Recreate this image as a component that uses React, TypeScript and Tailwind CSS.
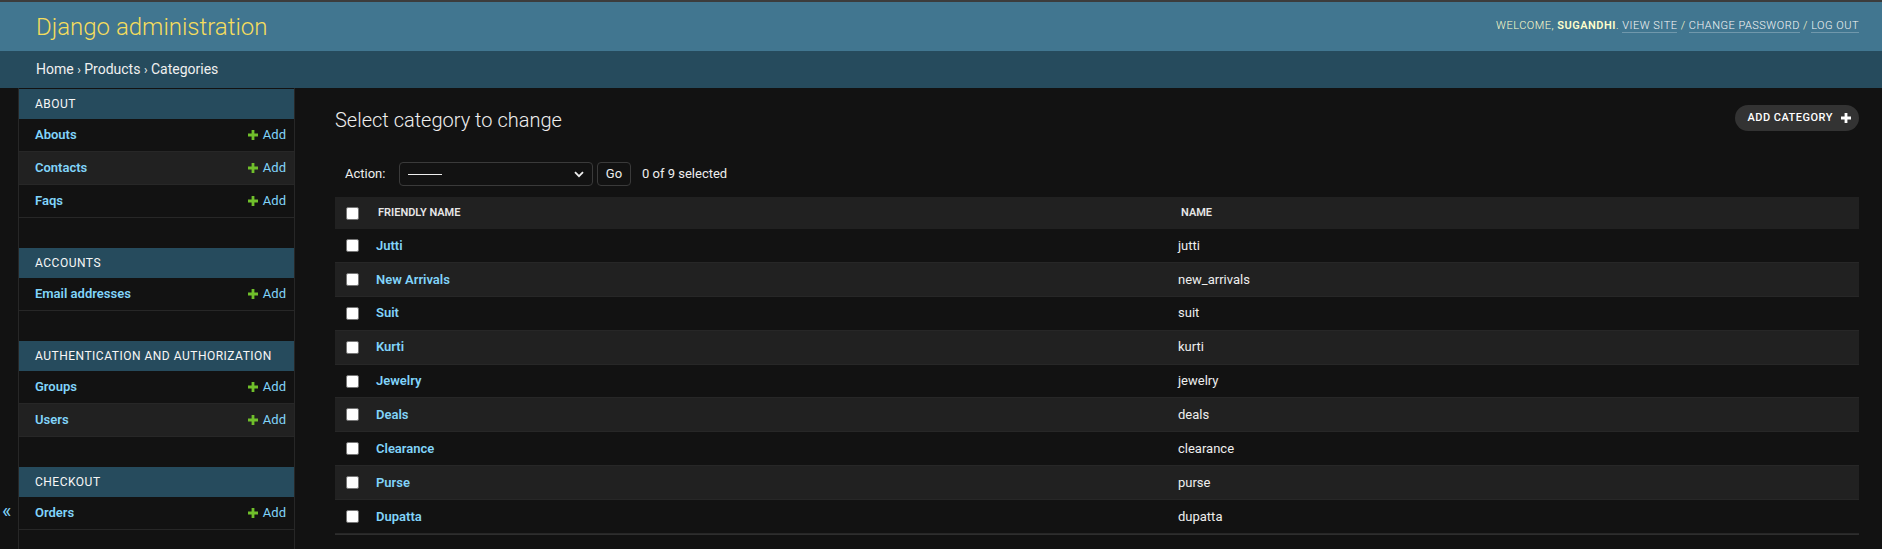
import React from 'react';

const sidebarModules = [
    { title: 'About', models: ['Abouts', 'Contacts', 'Faqs'] },
    { title: 'Accounts', models: ['Email addresses'] },
    { title: 'Authentication and Authorization', models: ['Groups', 'Users'] },
    { title: 'Checkout', models: ['Orders'] },
];

const categories = [
    ['Jutti', 'jutti'],
    ['New Arrivals', 'new_arrivals'],
    ['Suit', 'suit'],
    ['Kurti', 'kurti'],
    ['Jewelry', 'jewelry'],
    ['Deals', 'deals'],
    ['Clearance', 'clearance'],
    ['Purse', 'purse'],
    ['Dupatta', 'dupatta'],
];

const PlusIcon: React.FC<{ color: string }> = ({ color }) => (
    <svg width="10" height="10" viewBox="0 0 10 10" className="shrink-0">
        <path d="M3.6 0h2.8v3.6H10v2.8H6.4V10H3.6V6.4H0V3.6h3.6z" fill={color} />
    </svg>
);

const Checkbox: React.FC = () => (
    <span className="block w-[13px] h-[13px] bg-white rounded-[2px] border border-[#767676]" />
);

export default function App() {
    return (
        <div className="h-[549px] overflow-hidden bg-[#121212] font-[family-name:Roboto,sans-serif] text-[#eeeeee]">
            <div className="h-[2px] bg-[#3c3c3c]" />

            {/* header */}
            <div className="h-[49px] bg-[#417690] flex items-center justify-between pl-[36px] pr-[23px]">
                <div className="text-[24px] font-light text-[#f5dd5d] leading-none">Django administration</div>
                <div className="text-[11px] tracking-[0.5px] uppercase font-light text-[#ffffcc]">
                    Welcome, <strong className="font-semibold">Sugandhi</strong>.{' '}
                    <a className="text-[#f7f7f7] border-b border-white/25">View site</a> /{' '}
                    <a className="text-[#f7f7f7] border-b border-white/25">Change password</a> /{' '}
                    <a className="text-[#f7f7f7] border-b border-white/25">Log out</a>
                </div>
            </div>

            {/* breadcrumbs */}
            <div className="h-[37px] bg-[#264b5d] flex items-center pl-[36px] text-[14px] text-[#f0f0f0] whitespace-pre">
                Home <span className="text-[12px]">›</span> Products <span className="text-[12px]">›</span> Categories
            </div>

            <div className="flex h-[461px]">
                {/* sidebar toggle */}
                <div className="w-[19px] shrink-0 border-r border-[#272727]">
                    <div className="pt-[413px] pl-[2px] text-[20px] leading-none text-[#81d4fa]">«</div>
                </div>

                {/* nav sidebar */}
                <div className="w-[276px] shrink-0 border-r border-[#272727] pt-px">
                    {sidebarModules.map((m) => (
                        <div key={m.title} className="mb-[30px]">
                            <div className="h-[30px] bg-[#264b5d] flex items-center pl-[16px] text-[12px] uppercase tracking-[0.5px] text-[#f7f7f7]">
                                {m.title}
                            </div>
                            {m.models.map((name, i) => (
                                <div
                                    key={name}
                                    className={`h-[33px] border-b border-[#272727] flex items-center justify-between pl-[16px] pr-[8px] text-[13px] ${i % 2 === 1 ? 'bg-[#212121]' : 'bg-[#121212]'}`}
                                >
                                    <span className="font-semibold text-[#81d4fa]">{name}</span>
                                    <span className="flex items-center gap-[5px] text-[#81d4fa]">
                                        <PlusIcon color="#70bf2b" />
                                        Add
                                    </span>
                                </div>
                            ))}
                        </div>
                    ))}
                </div>

                {/* content */}
                <div className="flex-1 pl-[40px] pr-[23px] pt-[20px]">
                    <div className="flex items-start justify-between mb-[22px]">
                        <h1 className="text-[20px] leading-[24px] font-light text-[#eeeeee]">Select category to change</h1>
                        <div className="-mt-[3px] h-[26px] rounded-full bg-[#333333] flex items-center gap-[8px] pl-[12px] pr-[8px] text-[11px] font-medium tracking-[0.5px] uppercase text-white">
                            Add category
                            <PlusIcon color="#ffffff" />
                        </div>
                    </div>

                    {/* actions */}
                    <div className="flex items-center pt-[8px] pb-[11px] pl-[10px] text-[13px]">
                        <span className="w-[54px]">Action:</span>
                        <div className="w-[194px] h-[24px] rounded-[4px] border border-[#3a3a3a] bg-[#121212] flex items-center justify-between pl-[8px] pr-[8px]">
                            <span className="block w-[34px] h-px bg-[#eeeeee]" />
                            <svg width="10" height="7" viewBox="0 0 10 7">
                                <path d="M1 1.2l4 4 4-4" stroke="#eeeeee" strokeWidth="1.8" fill="none" />
                            </svg>
                        </div>
                        <div className="ml-[4px] w-[34px] h-[24px] rounded-[4px] border border-[#3a3a3a] bg-[#121212] flex items-center justify-center">
                            Go
                        </div>
                        <span className="ml-[11px]">0 of 9 selected</span>
                    </div>

                    {/* results */}
                    <div className="border-b border-[#2e2e2e]">
                        <div className="grid grid-cols-[33px_802px_1fr] h-[32px] items-center bg-[#212121] text-[11px] font-semibold uppercase text-[#e6e6e6]">
                            <div className="pl-[11px]"><Checkbox /></div>
                            <div className="pl-[10px]">Friendly name</div>
                            <div className="pl-[11px]">Name</div>
                        </div>
                        {categories.map(([label, slug], i) => (
                            <div
                                key={slug}
                                className={`grid grid-cols-[33px_802px_1fr] h-[33.9px] items-center border-b border-[#272727] text-[13px] ${i % 2 === 1 ? 'bg-[#212121]' : 'bg-[#121212]'}`}
                            >
                                <div className="pl-[11px]"><Checkbox /></div>
                                <div className="pl-[8px] font-semibold text-[#81d4fa]">{label}</div>
                                <div className="pl-[8px] text-[#eeeeee]">{slug}</div>
                            </div>
                        ))}
                    </div>
                </div>
            </div>
        </div>
    );
}
